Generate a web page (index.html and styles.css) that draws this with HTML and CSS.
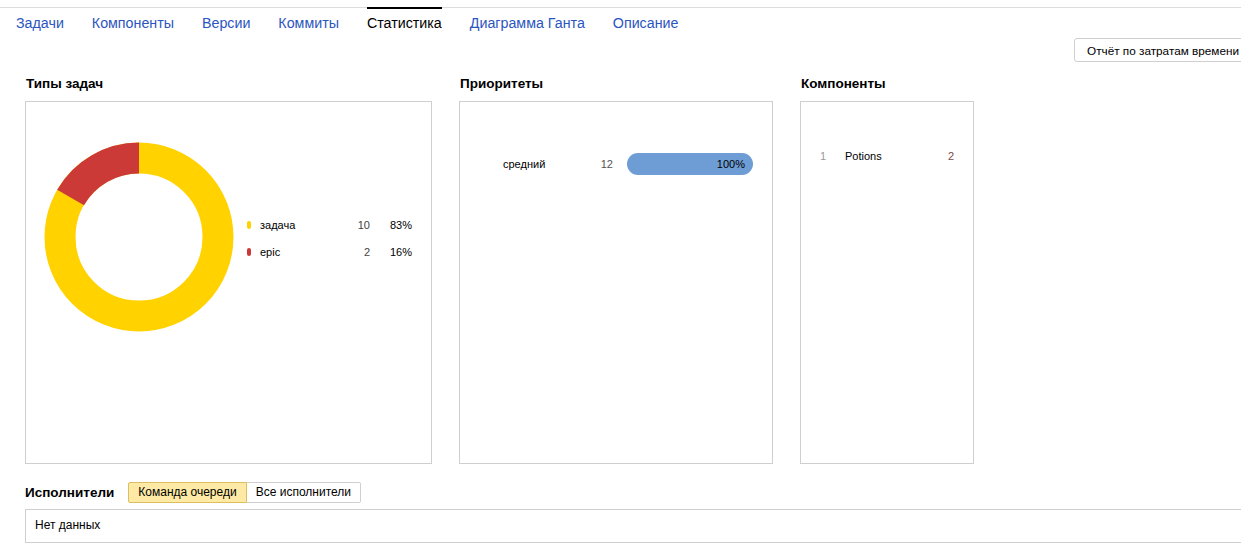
FILE: index.html
```html
<!DOCTYPE html>
<html lang="ru">
<head>
<meta charset="utf-8">
<title>Статистика</title>
<link rel="stylesheet" href="styles.css">
</head>
<body>
<nav class="tabs">
  <a class="tab">Задачи</a>
  <a class="tab">Компоненты</a>
  <a class="tab">Версии</a>
  <a class="tab">Коммиты</a>
  <a class="tab tab-active">Статистика</a>
  <a class="tab">Диаграмма Ганта</a>
  <a class="tab">Описание</a>
</nav>
<div class="toolbar">
  <button class="btn">Отчёт по затратам времени</button>
</div>
<main class="content">
  <div class="widgets">
    <section class="widget">
      <h2 class="widget-title">Типы задач</h2>
      <div class="box box-types">
        <svg class="donut" width="190" height="190" viewBox="0 0 190 190">
          <circle cx="95" cy="95" r="79" fill="none" stroke="#ffd200" stroke-width="31"/>
          <path d="M95 16 A79 79 0 0 0 26.58 55.5" fill="none" stroke="#cc3a37" stroke-width="31"/>
        </svg>
        <div class="legend">
          <div class="legend-row">
            <span class="dot dot-yellow"></span>
            <span class="legend-label">задача</span>
            <span class="legend-count">10</span>
            <span class="legend-pct">83%</span>
          </div>
          <div class="legend-row">
            <span class="dot dot-red"></span>
            <span class="legend-label">epic</span>
            <span class="legend-count">2</span>
            <span class="legend-pct">16%</span>
          </div>
        </div>
      </div>
    </section>
    <section class="widget">
      <h2 class="widget-title">Приоритеты</h2>
      <div class="box box-prio">
        <div class="prio-row">
          <span class="prio-label">средний</span>
          <span class="prio-count">12</span>
          <span class="prio-bar"><span class="prio-fill" style="width:100%">100%</span></span>
        </div>
      </div>
    </section>
    <section class="widget">
      <h2 class="widget-title">Компоненты</h2>
      <div class="box box-comp">
        <div class="comp-row">
          <span class="comp-num">1</span>
          <span class="comp-name">Potions</span>
          <span class="comp-count">2</span>
        </div>
      </div>
    </section>
  </div>
  <div class="assignees-head">
    <h2 class="assignees-title">Исполнители</h2>
    <div class="switch">
      <span class="switch-item switch-on">Команда очереди</span>
      <span class="switch-item">Все исполнители</span>
    </div>
  </div>
  <div class="empty-box">Нет данных</div>
</main>
</body>
</html>
```
FILE: styles.css
```css
html, body {
  margin: 0;
  padding: 0;
  background: #fff;
  overflow: hidden;
}
body {
  font-family: "Liberation Sans", Arial, sans-serif;
  color: #000;
  width: 1241px;
  height: 558px;
}
.tabs {
  margin-top: 7px;
  border-top: 1px solid #dcdcdc;
  display: flex;
  gap: 28px;
  padding-left: 16px;
}
.tab {
  margin-top: -1px;
  border-top: 2px solid transparent;
  padding-top: 5px;
  font-size: 14.25px;
  line-height: 18px;
  color: #2b55c0;
  cursor: pointer;
}
.tab-active {
  border-top-color: #000;
  color: #000;
}
.toolbar {
  display: flex;
  justify-content: flex-end;
  margin-top: 6px;
  margin-right: -16px;
}
.btn {
  font-family: "Liberation Sans", Arial, sans-serif;
  font-size: 11.75px;
  height: 24px;
  padding: 0 17px 0 12px;
  background: #fff;
  border: 1px solid #cfcfcf;
  border-radius: 3px;
  color: #000;
  white-space: nowrap;
}
.content {
  padding-left: 25px;
}
.widgets {
  display: flex;
  gap: 27px;
  margin-top: 13px;
}
.widget-title {
  margin: 0 0 8px 1px;
  font-size: 13.5px;
  line-height: 18px;
  font-weight: bold;
}
.box {
  border: 1px solid #cfcfcf;
  height: 363px;
  box-sizing: border-box;
}
.box-types {
  width: 407px;
  display: flex;
  align-items: flex-start;
  padding: 40px 0 0 18px;
}
.donut {
  display: block;
  flex: none;
}
.legend {
  margin: 74px 0 0 13px;
  font-size: 11px;
}
.legend-row {
  display: grid;
  grid-template-columns: 13px 90px 20px 42px;
  align-items: center;
  height: 18px;
  margin-bottom: 9px;
}
.dot {
  width: 4px;
  height: 8px;
  border-radius: 2px;
}
.dot-yellow { background: #ffd200; }
.dot-red { background: #cc3a37; }
.legend-count { text-align: right; color: #444; }
.legend-pct { text-align: right; }
.box-prio {
  width: 314px;
  padding: 51px 0 0 43px;
}
.prio-row {
  display: flex;
  align-items: center;
  font-size: 11px;
}
.prio-label { width: 87px; }
.prio-count { width: 23px; text-align: right; color: #555; margin-right: 14px; }
.prio-bar {
  width: 126px;
  height: 22px;
  display: flex;
}
.prio-fill {
  background: #6e9dd6;
  border-radius: 11px;
  display: flex;
  align-items: center;
  justify-content: flex-end;
  padding-right: 8px;
  box-sizing: border-box;
}
.box-comp {
  width: 174px;
  padding: 46px 19px 0 19px;
}
.comp-row {
  display: flex;
  align-items: center;
  font-size: 11px;
  height: 16px;
}
.comp-num { color: #999; width: 25px; }
.comp-name { flex: 1; }
.comp-count { color: #7a4a4a; }
.assignees-head {
  display: flex;
  align-items: center;
  margin-top: 18px;
  gap: 14px;
}
.assignees-title {
  margin: 0;
  font-size: 13.5px;
  font-weight: bold;
  line-height: 18px;
}
.switch {
  display: flex;
  font-size: 12px;
}
.switch-item {
  height: 21px;
  box-sizing: border-box;
  line-height: 19px;
  padding: 0 9px;
  border: 1px solid #cfcfcf;
  border-radius: 0 2px 2px 0;
  border-left: none;
}
.switch-on {
  background: #feeaa5;
  border: 1px solid #dcbf62;
  border-radius: 2px 0 0 2px;
}
.empty-box {
  margin-top: 6px;
  margin-right: -10px;
  border: 1px solid #cfcfcf;
  height: 34px;
  box-sizing: border-box;
  padding-left: 9px;
  font-size: 12px;
  line-height: 31px;
}
```
